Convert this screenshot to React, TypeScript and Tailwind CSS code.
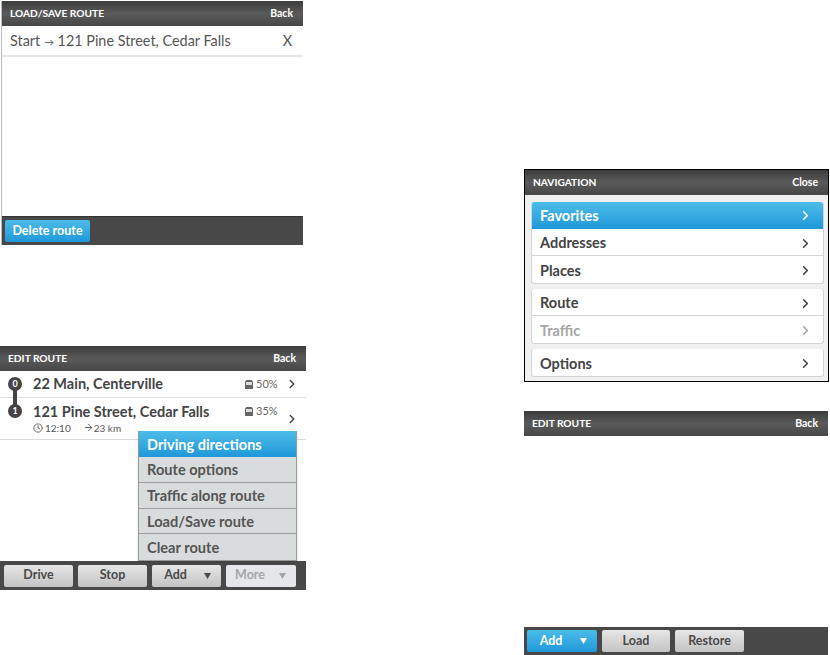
import { ChevronRight, Clock, ArrowRight } from "lucide-react";

const FONT = "font-['Lato','Open_Sans',sans-serif]";
const BLUE = "bg-gradient-to-b from-[#4bbce8] to-[#1e98da]";

function Header({ title, action }: { title: string; action: string }) {
	return (
		<div className="h-[25px] shrink-0 flex items-center justify-between pl-[8px] pr-[10px] bg-gradient-to-b from-[#3c3c3c] via-[#5a5a5a] to-[#474747] text-white text-[10.5px] font-bold">
			<span className="text-[10.2px]">{title}</span>
			<span>{action}</span>
		</div>
	);
}

function Triangle() {
	return (
		<svg width="7" height="6" viewBox="0 0 7 6" className="absolute right-[10px] top-[8px]" fill="currentColor">
			<path d="M0 0h7L3.5 6z" />
		</svg>
	);
}

function BatteryIcon({ className }: { className?: string }) {
	return (
		<svg width="8" height="9" viewBox="0 0 8 9" className={className}>
			<path d="M1.5 0h5l1.5 1.5V9H0V1.5z" fill="#666" />
			<rect x="1" y="2" width="6" height="3" fill="#ddd" />
		</svg>
	);
}

function BarButton({ label, width, arrow, blue, off }: { label: string; width: string; arrow?: boolean; blue?: boolean; off?: boolean }) {
	const tone = blue
		? `${BLUE} text-white`
		: off
			? "bg-[#e4e6ea] text-[#a4a6aa]"
			: "bg-gradient-to-b from-[#e6e6e6] to-[#c4c4c4] text-[#4a4a4a]";
	return (
		<div className={`${width} ${tone} h-[22px] rounded-[2px] flex items-center justify-center relative text-[12.5px] font-bold`}>
			<span className={arrow ? "mr-[22px]" : ""}>{label}</span>
			{arrow && <Triangle />}
		</div>
	);
}

function NavRow({ label, active, off, last }: { label: string; active?: boolean; off?: boolean; last?: boolean }) {
	const tone = active ? `${BLUE} text-white` : off ? "text-[#a6a6a6] pt-[2px]" : "text-[#444] pt-[2px]";
	return (
		<div className={`${tone} h-[27px] flex items-center justify-between pl-[8px] pr-[10px] text-[14.5px] font-bold ${last || active ? "" : "border-b border-[#d6d6d6]"}`}>
			<span>{label}</span>
			<ChevronRight size={15} strokeWidth={2.5} />
		</div>
	);
}

function Group({ children }: { children: React.ReactNode }) {
	return <div className="rounded-[3px] overflow-hidden bg-white border-b border-x border-[#d4d4d4]">{children}</div>;
}

function Node({ n }: { n: number }) {
	return (
		<div className={`absolute left-[8px] w-[14px] h-[14px] rounded-full bg-[#444] text-white text-[9px] font-bold flex items-center justify-center ${n === 0 ? "top-[6px]" : "top-[33px]"}`}>
			{n}
		</div>
	);
}

function LoadSavePanel() {
	return (
		<section className="w-[302px] h-[244px] ml-[1px] flex flex-col border-l border-[#bbb]">
			<Header title="LOAD/SAVE ROUTE" action="Back" />
			<div className="h-[31px] pt-[1px] flex items-center justify-between pl-[8px] pr-[11px] border-b-2 border-[#e6e6e6] text-[#555] text-[14.4px]">
				<span>
					Start <span className="text-[10px]">→</span> 121 Pine Street, Cedar Falls
				</span>
				<span>X</span>
			</div>
			<div className="flex-1" />
			<div className="h-[29px] bg-[#484848] flex items-center pl-[3px] border-t border-[#333]">
				<BarButton label="Delete route" width="w-[85px]" blue />
			</div>
		</section>
	);
}

function EditRoutePanel() {
	const menu = ["Route options", "Traffic along route", "Load/Save route", "Clear route"];
	return (
		<section className="w-[306px] h-[244px] flex flex-col relative">
			<Header title="EDIT ROUTE" action="Back" />
			<div className="flex-1 relative">
				{/* Route stops */}
				<div className="absolute left-[13px] top-[13px] w-[4px] h-[26px] bg-[#444]" />
				<Node n={0} />
				<Node n={1} />
				<div className="h-[27px] flex items-center pl-[33px] pr-[7px] border-b border-[#ddd] text-[#444]">
					<span className="text-[14.5px] font-bold flex-1">22 Main, Centerville</span>
					<BatteryIcon className="mr-[3px]" />
					<span className="text-[11px] w-[24px] text-[#666]">50%</span>
					<ChevronRight size={14} strokeWidth={2.5} className="ml-[5px]" />
				</div>
				<div className="h-[42px] flex items-center pl-[33px] pr-[7px] border-b border-[#ddd] text-[#444]">
					<div className="flex-1 -mt-[2px]">
						<div className="text-[14.5px] font-bold leading-[20px]">121 Pine Street, Cedar Falls</div>
						<div className="flex items-center text-[10px] leading-[12px] text-[#555]">
							<Clock size={10} className="mr-[2px]" />
							<span className="mr-[12px]">12:10</span>
							<ArrowRight size={11} />
							<span>23 km</span>
						</div>
					</div>
					<BatteryIcon className="mr-[3px] -mt-[15px]" />
					<span className="text-[11px] w-[24px] text-[#666] -mt-[15px]">35%</span>
					<ChevronRight size={14} strokeWidth={2.5} className="ml-[5px]" />
				</div>
			</div>
			<div className="h-[29px] bg-[#484848] flex items-center gap-[5px] pl-[4px]">
				<BarButton label="Drive" width="w-[69px]" />
				<BarButton label="Stop" width="w-[69px]" />
				<BarButton label="Add" width="w-[69px]" arrow />
				<BarButton label="More" width="w-[70px]" arrow off />
			</div>
			{/* Popup menu */}
			<div className="absolute left-[138px] top-[85px] w-[159px] h-[130px] bg-[#d9dcdc] border border-[#999] border-t-0 shadow-sm">
				<div className={`${BLUE} h-[26px] pt-[2px] pl-[8px] flex items-center text-white text-[14.5px] font-bold`}>Driving directions</div>
				{menu.map((item) => (
					<div key={item} className="h-[25.75px] pt-[2px] pl-[8px] flex items-center text-[#555] text-[14.6px] font-bold border-b border-[#9a9a9a] last:border-b-0">
						{item}
					</div>
				))}
			</div>
		</section>
	);
}

function NavigationPanel() {
	return (
		<section className="w-[305px] h-[213px] border border-black bg-[#f0f0f0] flex flex-col">
			<Header title="NAVIGATION" action="Close" />
			<div className="flex-1 flex flex-col gap-[5px] pl-[6px] pr-[4px] pt-[7px]">
				<Group>
					<NavRow label="Favorites" active />
					<NavRow label="Addresses" />
					<NavRow label="Places" last />
				</Group>
				<Group>
					<NavRow label="Route" />
					<NavRow label="Traffic" off last />
				</Group>
				<Group>
					<NavRow label="Options" last />
				</Group>
			</div>
		</section>
	);
}

function EmptyRoutePanel() {
	return (
		<section className="w-[304px] h-[244px] flex flex-col">
			<Header title="EDIT ROUTE" action="Back" />
			<div className="flex-1" />
			<div className="h-[28px] bg-[#484848] flex items-center gap-[5px] pl-[3px]">
				<BarButton label="Add" width="w-[70px]" arrow blue />
				<BarButton label="Load" width="w-[68px]" />
				<BarButton label="Restore" width="w-[69px]" />
			</div>
		</section>
	);
}

export default function App() {
	return (
		<div className={`${FONT} w-[830px] h-[655px] bg-white flex justify-between overflow-hidden`}>
			<div className="flex flex-col gap-[101px] pt-[1px]">
				<LoadSavePanel />
				<EditRoutePanel />
			</div>
			<div className="flex flex-col gap-[29px] pt-[169px] mr-[1px] w-[305px]">
				<NavigationPanel />
				<EmptyRoutePanel />
			</div>
		</div>
	);
}
